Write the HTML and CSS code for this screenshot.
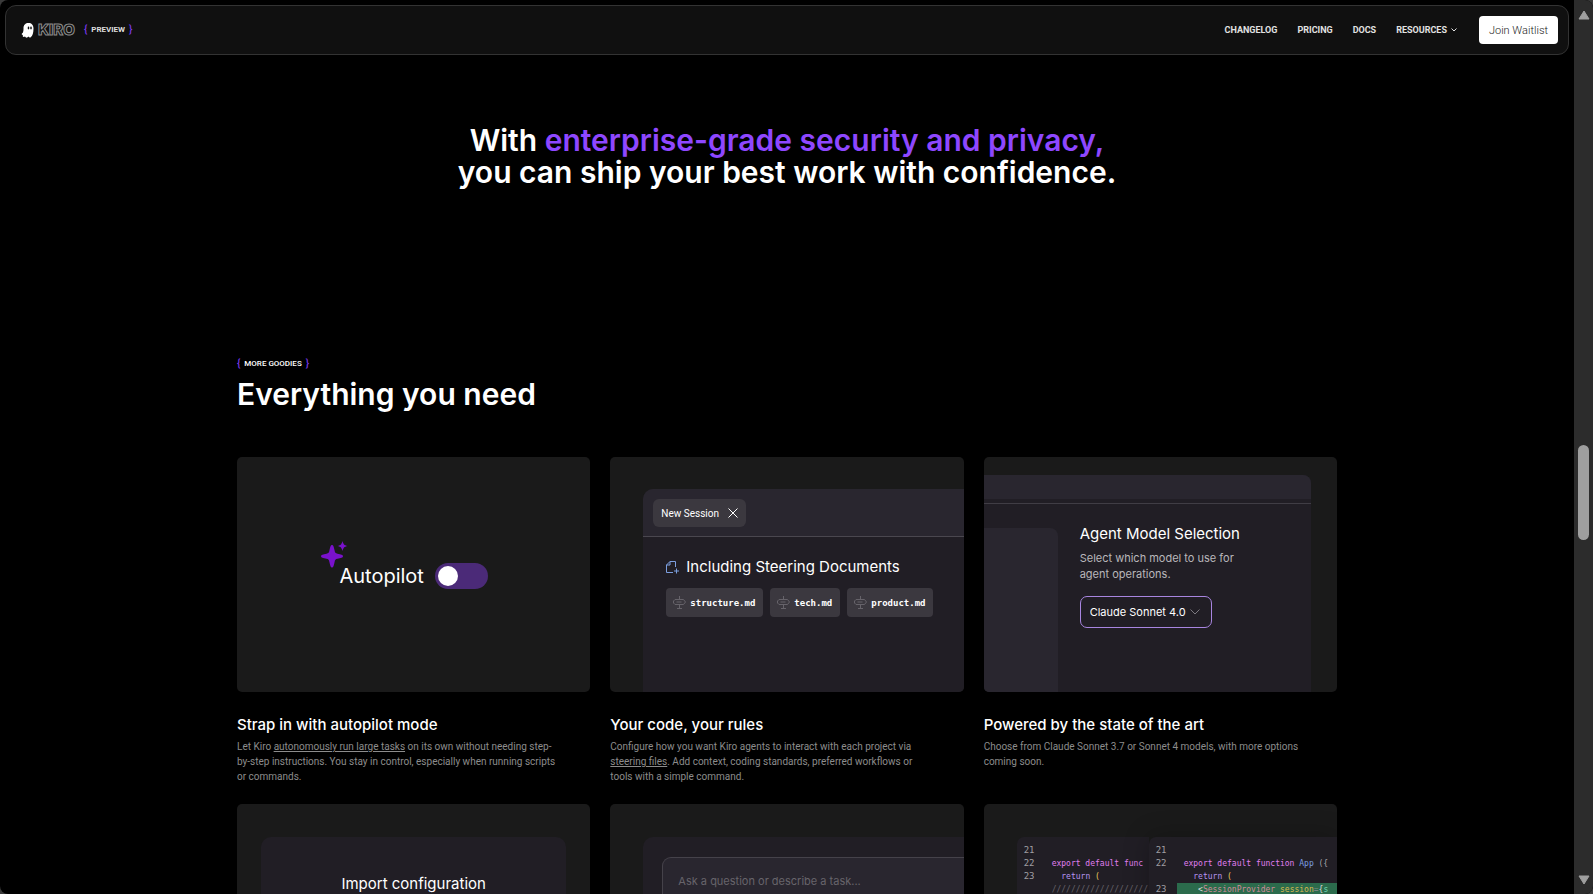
FILE: index.html
```html
<!DOCTYPE html>
<html lang="en">
<head>
  <meta charset="UTF-8" />
  <meta name="viewport" content="width=device-width, initial-scale=1.0" />
  <title>Kiro</title>
  <link rel="stylesheet" href="styles.css">
</head>
<body>
  <div class="page">
    <header class="navbar">
      <a class="logo" href="#">
        <svg class="ghost" viewBox="0 0 26 30" aria-hidden="true">
          <path fill="#fff" d="M4 19C5 16 5 13 5 10C5 4 9 0 15 0C21 0 25 4 25 11C25 19 23 26 20 28C18 30 16 29 15 27C13 30 9 30 8 27C5 29 2 27 4 24C1 24 0 22 4 19Z" />
          <ellipse cx="15" cy="10" rx="1.6" ry="2.8" fill="#111" />
          <ellipse cx="20" cy="10" rx="1.6" ry="2.8" fill="#111" />
        </svg>
        <span class="wordmark">KIRO</span>
      </a>
      <span class="tag tag-preview"><i>{</i><b>PREVIEW</b><i>}</i></span>
      <nav class="links">
        <a href="#">CHANGELOG</a>
        <a href="#">PRICING</a>
        <a href="#">DOCS</a>
        <a href="#">RESOURCES
          <svg width="6" height="4" viewBox="0 0 6 4" aria-hidden="true"><path d="M.5.5 3 3 5.500.5" fill="none" stroke="currentColor" /></svg>
        </a>
      </nav>
      <button class="join" type="button">Join Waitlist</button>
    </header>

    <main>
      <h2 class="statement">With <span>enterprise-grade security and privacy,</span><br>you can ship your best work with confidence.</h2>

      <section class="goodies">
        <span class="tag"><i>{</i><b>MORE GOODIES</b><i>}</i></span>
        <h2>Everything you need</h2>

        <div class="grid">
          <article>
            <div class="art autopilot">
              <label for="autopilot">
                <svg class="sparkle" viewBox="0 0 27 27" aria-hidden="true">
                  <path fill="#7a12cc" d="M11 4C12.500 4 12.800 6 13.600 9.500C14 11.800 14.500 12.300 16.500 12.700C20 13.400 22 13.700 22 15.200C22 16.700 20 17 16.500 17.700C14.500 18.100 14 18.600 13.600 21C12.800 24.500 12.500 26.500 11 26.500C9.500 26.500 9.200 24.500 8.400 21C8 18.600 7.500 18.100 5.500 17.700C2 17 0 16.700 0 15.200C0 13.700 2 13.400 5.500 12.700C7.500 12.300 8 11.800 8.400 9.500C9.200 6 9.500 4 11 4Z" />
                  <path fill="#7a12cc" d="M21.500 0C22.500 3.500 23 4 26.500 5C23 6 22.500 6.500 21.500 10C20.500 6.500 20 6 16.500 5C20 4 20.500 3.500 21.500 0Z" />
                </svg>
                Autopilot
              </label>
              <input type="checkbox" id="autopilot" class="toggle" role="switch">
            </div>
            <h3>Strap in with autopilot mode</h3>
            <p>Let Kiro <a href="#">autonomously run large tasks</a> on its own without needing step-<br>by-step instructions. You stay in control, especially when running scripts<br>or commands.</p>
          </article>

          <article>
            <div class="art steering">
              <div class="panel">
                <div class="tabs">
                  <button class="tab" type="button">New Session
                    <svg width="10" height="10" viewBox="0 0 10 10" aria-hidden="true"><path d="M.5.5l9 9m0-9l-9 9" stroke="#fff" /></svg>
                  </button>
                </div>
                <div class="session">
                  <h4>
                    <svg width="13" height="13" viewBox="0 0 13 13" fill="none" stroke="#7d9fe0" aria-hidden="true"><path d="M7 11.500H.5V4L4 .5h5.500V6M.5 4H4V.5M10.500 7.500v5M8 10h5" /></svg>
                    Including Steering Documents
                  </h4>
                  <ul class="files">
                    <li><svg width="13" height="13" viewBox="0 0 13 13" aria-hidden="true"><use href="#signpost" /></svg>structure.md</li>
                    <li><svg width="13" height="13" viewBox="0 0 13 13" aria-hidden="true"><use href="#signpost" /></svg>tech.md</li>
                    <li><svg width="13" height="13" viewBox="0 0 13 13" aria-hidden="true"><use href="#signpost" /></svg>product.md</li>
                  </ul>
                </div>
              </div>
            </div>
            <h3>Your code, your rules</h3>
            <p>Configure how you want Kiro agents to interact with each project via<br><a href="#">steering files</a>. Add context, coding standards, preferred workflows or<br>tools with a simple command.</p>
          </article>

          <article>
            <div class="art models">
              <div class="panel">
                <div class="bar"></div>
                <div class="settings">
                  <div class="side"></div>
                  <div class="model">
                    <h4><label for="model">Agent Model Selection</label></h4>
                    <p>Select which model to use for<br>agent operations.</p>
                    <div class="select">
                      <select id="model"><option>Claude Sonnet 4.0</option></select>
                      <svg width="10" height="6" viewBox="0 0 10 6" aria-hidden="true"><path d="M.5.5 5 5 9.500.5" fill="none" stroke="#7c7980" /></svg>
                    </div>
                  </div>
                </div>
              </div>
            </div>
            <h3>Powered by the state of the art</h3>
            <p>Choose from Claude Sonnet 3.7 or Sonnet 4 models, with more options<br>coming soon.</p>
          </article>

          <article>
            <div class="art import">
              <div class="panel"><h4>Import configuration</h4></div>
            </div>
          </article>

          <article>
            <div class="art chat">
              <div class="panel">
                <textarea aria-label="Message" placeholder="Ask a question or describe a task..."></textarea>
              </div>
            </div>
          </article>

          <article>
            <div class="art diff">
              <div class="code before">
                <div class="line"><span class="num">21</span></div>
                <div class="line"><span class="num">22</span><code><span class="kw">export default func</span></code></div>
                <div class="line"><span class="num">23</span><code>  <span class="ret">return</span> <span class="par">(</span></code></div>
                <div class="line"><span class="num"></span><code class="gap">////////////////////</code></div>
              </div>
              <div class="code after">
                <div class="line"><span class="num">21</span></div>
                <div class="line"><span class="num">22</span><code><span class="kw">export default function</span> <span class="fn">App</span> ({</code></div>
                <div class="line"><span class="num"></span><code>  <span class="ret">return</span> <span class="par">(</span></code></div>
                <div class="line added"><span class="num">23</span><code>   &lt;<span class="comp">SessionProvider</span> <span class="attr">session</span><span class="eq">=</span>{<span class="val">s</span></code></div>
              </div>
            </div>
          </article>
        </div>
      </section>
    </main>
  </div>

  <div class="scrollbar" aria-hidden="true">
    <svg width="12" height="10" viewBox="0 0 12 10"><path d="M6 1 11 9H1Z" fill="#9f9f9f" stroke="#9f9f9f" stroke-linejoin="round" /></svg>
    <div class="track"><div class="thumb"></div></div>
    <svg width="12" height="10" viewBox="0 0 12 10"><path d="M6 9 11 1H1Z" fill="#9f9f9f" stroke="#9f9f9f" stroke-linejoin="round" /></svg>
  </div>

  <svg width="0" height="0" class="defs" aria-hidden="true">
    <symbol id="signpost" viewBox="0 0 13 13">
      <path d="M6.500 0v3M6.500 9v3.500M4 12.500h5M2 3.500h8.500l2 2.500-2 2.500H2L.5 7V5ZM3.500 6h5" fill="none" stroke="#66636a" />
    </symbol>
  </svg>
</body>
</html>
```
FILE: styles.css
```css
* { box-sizing: border-box; }
html { background: #3a3a3a; }
body {
  margin: 0;
  height: 100vh;
  display: flex;
  overflow: hidden;
  border-radius: 8px;
  background: #000;
  color: #fff;
  font-family: Inter, "Liberation Sans", sans-serif;
}
h2, h3, h4, p, ul { margin: 0; padding: 0; font-weight: 500; }
a { color: inherit; }
button, select, textarea { font-family: inherit; color: inherit; }
.defs { position: absolute; }

.page { flex: 1; min-width: 0; overflow: hidden; }

/* navbar */
.navbar {
  display: flex;
  align-items: center;
  height: 50px;
  margin: 5px 5px 0;
  padding: 0 10px 0 15px;
  border: 1px solid #333;
  border-radius: 11px;
  background: #101010;
}
.logo { display: flex; align-items: center; gap: 4px; text-decoration: none; }
.ghost { width: 13px; height: 15px; }
.wordmark {
  color: #101010;
  font-size: 15px;
  font-weight: 800;
  line-height: 16px;
  -webkit-text-stroke: 1px #8c8c8c;
}
.tag {
  display: flex;
  align-items: center;
  gap: 4px;
  font-family: Roboto, sans-serif;
  font-size: 8px;
  line-height: 12px;
}
.tag b { font-weight: 500; }
.tag i { color: #7c3aed; font-style: normal; font-size: 10px; font-weight: 500; }
.tag-preview { margin-left: 9px; }
.tag-preview b { font-weight: 700; color: #ddd; }
.links {
  display: flex;
  gap: 20px;
  margin-left: auto;
  font-family: Roboto, sans-serif;
  font-size: 9px;
  font-weight: 700;
  line-height: 12px;
  color: #e2e2e2;
}
.links a { display: flex; align-items: center; gap: 4px; text-decoration: none; }
.join {
  height: 28px;
  margin-left: 22px;
  padding: 0 10px;
  border: 0;
  border-radius: 4px;
  background: #fff;
  color: #222;
  font-family: Roboto, sans-serif;
  font-size: 11px;
  font-weight: 300;
}

/* statement */
.statement {
  margin: 69px 0 170px;
  text-align: center;
  font-size: 30px;
  font-weight: 600;
  line-height: 32px;
}
.statement span { color: #8e47ff; }

/* feature grid */
.goodies { max-width: 1100px; margin: 0 auto; }
.goodies h2 { margin: 5px 0 44px; font-size: 30px; font-weight: 600; line-height: 38px; }
.grid { display: grid; grid-template-columns: repeat(3, minmax(0, 1fr)); gap: 20px; }
.grid h3 { margin: 24px 0 5px; font-size: 15px; line-height: 18px; }
.grid article > p {
  color: #8c8c8c;
  font-family: Roboto, sans-serif;
  font-size: 10px;
  font-weight: 400;
  line-height: 15px;
}
.grid h4 { font-size: 15px; font-weight: 400; line-height: 18px; white-space: nowrap; }
.art {
  display: flex;
  height: 235px;
  overflow: hidden;
  border-radius: 5px;
  background: #1a1a1a;
}
.panel { flex: 1; background: #211e25; }

.autopilot { align-items: center; justify-content: center; gap: 11px; padding-top: 2px; }
.autopilot label { position: relative; font-size: 20px; line-height: 26px; }
.sparkle { position: absolute; left: -18px; top: -22px; width: 27px; height: 27px; }
.toggle {
  appearance: none;
  width: 53px;
  height: 26px;
  margin: 0;
  padding: 3px;
  border-radius: 13px;
  background: #4b2a78;
}
.toggle::before { content: ""; display: block; width: 20px; height: 20px; border-radius: 50%; background: #fff; }

.steering { padding: 32px 0 0 33px; }
.steering .panel { border-top-left-radius: 10px; }
.tabs { padding: 10px 10px 9px; border-bottom: 1px solid #4a474f; border-top-left-radius: 10px; background: #29262f; }
.tab {
  display: flex;
  align-items: center;
  gap: 9px;
  height: 28px;
  padding: 0 8px;
  border: 0;
  border-radius: 6px;
  background: #3b383f;
  font-family: Roboto, sans-serif;
  font-size: 10px;
}
.session { padding: 21px 23px; }
.session h4 { display: flex; align-items: center; gap: 7px; }
.files { display: flex; gap: 7px; margin-top: 12px; list-style: none; }
.files li {
  display: flex;
  align-items: center;
  gap: 4px;
  height: 29px;
  padding: 0 8px 0 7px;
  border-radius: 4px;
  background: #3b383f;
  font-family: "DejaVu Sans Mono", monospace;
  font-size: 9px;
  font-weight: 700;
}

.models { padding: 18px 26px 0 0; }
.models .panel { display: flex; flex-direction: column; border-top-right-radius: 8px; }
.bar { height: 24px; border-top-right-radius: 8px; background: #29262f; }
.settings { display: flex; flex: 1; gap: 22px; margin-top: 4px; padding-top: 24px; border-top: 1px solid #403d45; }
.side { width: 74px; border-top-right-radius: 8px; background: #29262f; }
.model p { margin: 7px 0 14px; color: #b9b7bb; font-size: 11px; font-weight: 400; line-height: 16px; }
.model h4 { margin-top: -3px; }
.select { display: grid; align-items: center; width: 132px; }
.select select, .select svg { grid-area: 1 / 1; }
.select select {
  appearance: none;
  height: 32px;
  padding: 0 9px;
  border: 1px solid #a885e0;
  border-radius: 7px;
  background: #211e25;
  font-size: 11px;
}
.select svg { justify-self: end; margin-right: 12px; pointer-events: none; }

.import { padding: 33px 24px 0; }
.import .panel { padding-top: 38px; border-radius: 10px; text-align: center; }

.chat { padding: 33px 0 0 33px; }
.chat .panel { display: flex; padding: 20px 0 0 19px; border-top-left-radius: 10px; }
.chat textarea {
  flex: 1;
  padding: 15px;
  border: 1px solid #45424a;
  border-width: 1px 0 0 1px;
  border-top-left-radius: 9px;
  background: #29262f;
  font-size: 11px;
  line-height: 16px;
  resize: none;
}
.chat textarea::placeholder { color: #67646b; }

.diff { padding: 33px 0 0 33px; }
.code {
  padding-top: 7px;
  border-top-left-radius: 7px;
  background: #211e25;
  color: #aaa8ac;
  font-family: "DejaVu Sans Mono", monospace;
  font-size: 8px;
}
.before { flex: 0 0 132px; }
.after { flex: 1; box-shadow: 0 0 26px rgba(0, 0, 0, 0.25); }
.line { display: flex; height: 13px; line-height: 13px; }
.num { flex: 0 0 28px; padding-left: 7px; color: #a09ea3; font-size: 9px; }
.code code { flex: 1; padding-left: 7px; font-family: inherit; white-space: pre; }
.kw { color: #e07ff0; }
.ret { color: #b794f0; }
.par { color: #f0d060; }
.fn { color: #7d9fe0; }
.gap { color: #67646b; }
.added code { background: #2b6b4c; color: #ddd; }
.comp { color: #d08a9a; }
.attr { color: #d9b84f; }
.eq { color: #8a8a8a; }
.val { color: #6fd6b0; }

/* scrollbar */
.scrollbar {
  display: flex;
  flex-direction: column;
  align-items: center;
  gap: 4px;
  width: 19px;
  padding: 10px 0 9px;
  background: #2c2c2c;
}
.track { flex: 1; padding-top: 421px; }
.thumb { width: 11px; height: 95px; border-radius: 6px; background: #9f9f9f; }
```
